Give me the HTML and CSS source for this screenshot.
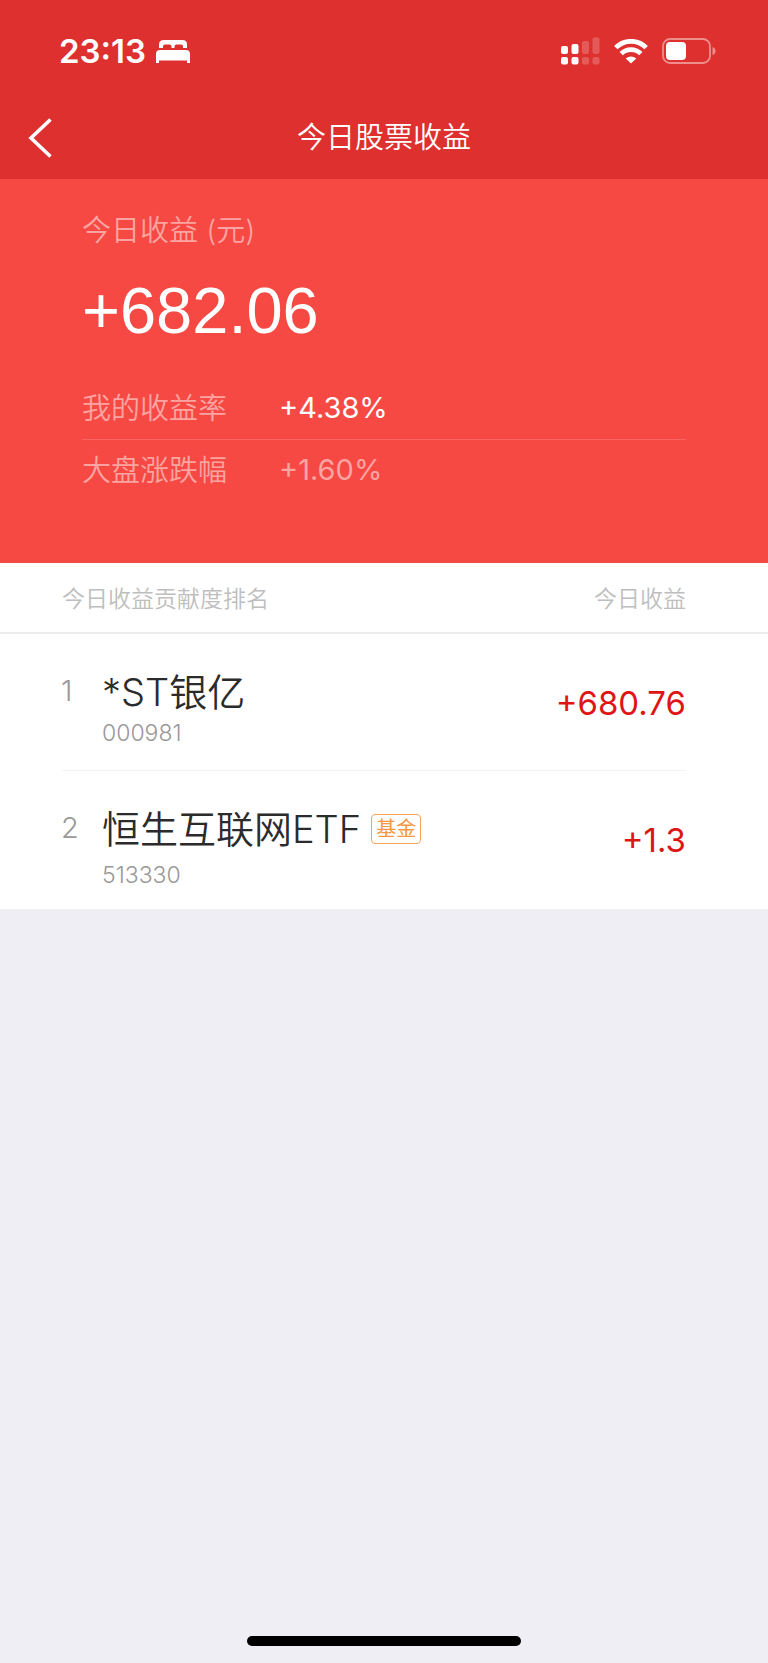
FILE: index.html
```
<!DOCTYPE html>
<html lang="zh-CN">
<head>
    <meta charset="UTF-8">
    <meta name="viewport" content="width=device-width, initial-scale=1.0">
    <title>今日股票收益</title>
    <link rel="stylesheet" href="styles.css">
</head>
<body>
    <header class="header">
        <div class="status-bar">
            <div class="status-left">
                <span class="time">23:13</span>
                <svg class="icon-bed" width="34" height="23" viewBox="0 0 34 23" fill="#fff">
                    <path d="M3 8V4.500Q3 0 7.500 0H26.500Q31 0 31 4.500V8H27V6.500Q27 4.500 25 4.500H20.500Q18.500 4.500 18.500 6.500V8H15.500V6.500Q15.500 4.500 13.500 4.500H9Q7 4.500 7 6.500V8Z"/>
                    <path d="M0 23V14Q0 10 4 10H30Q34 10 34 14V23H31V20.500H3V23Z"/>
                </svg>
            </div>
            <div class="status-right">
                <svg width="39" height="28" viewBox="0 0 39 28" fill="#fff">
                    <rect x="0" y="9" width="7" height="8" rx="2"/>
                    <rect x="10.500" y="7" width="7" height="10" rx="2"/>
                    <rect x="0" y="20" width="7" height="7.500" rx="2"/>
                    <rect x="10.500" y="20" width="7" height="7.500" rx="2"/>
                    <g opacity="0.2">
                        <rect x="21" y="4" width="7" height="13" rx="2"/>
                        <rect x="31.500" y="0.500" width="7" height="16.500" rx="2"/>
                        <rect x="21" y="20" width="7" height="7.500" rx="2"/>
                        <rect x="31.500" y="20" width="7" height="7.500" rx="2"/>
                    </g>
                </svg>
                <svg width="34" height="25" viewBox="0 0 34 25">
                    <g fill="none" stroke="#fff" stroke-width="4.800">
                        <path d="M1.800 8.600A21.500 21.500 0 0 1 32.200 8.600"/>
                        <path d="M7.200 14.600A14 14 0 0 1 26.800 14.600"/>
                    </g>
                    <path d="M17 24.500L11.700 19.500Q17 15.600 22.300 19.500Z" fill="#fff"/>
                </svg>
                <svg width="54" height="26" viewBox="0 0 54 26">
                    <rect x="1" y="1" width="47" height="24" rx="7" fill="none" stroke="#fff" stroke-width="1.800" opacity="0.450"/>
                    <rect x="4" y="4" width="20" height="18" rx="4" fill="#fff"/>
                    <path d="M50.500 9Q53.500 10 53.500 13T50.500 17Z" fill="#fff" opacity="0.450"/>
                </svg>
            </div>
        </div>
        <nav class="nav-bar">
            <button class="back" type="button" aria-label="返回">
                <svg width="24" height="40" viewBox="0 0 24 40" fill="none" stroke="#fff" stroke-width="3.600">
                    <path d="M22.500 1.500L3 20L22.500 38.500"/>
                </svg>
            </button>
            <h1 class="title">今日股票收益</h1>
        </nav>
    </header>

    <main>
        <!-- 收益汇总 -->
        <section class="summary">
            <h2 class="summary-label">今日收益 (元)</h2>
            <p class="summary-value">+682.06</p>
            <dl class="rates">
                <div class="rate">
                    <dt>我的收益率</dt>
                    <dd>+4.38%</dd>
                </div>
                <div class="rate rate-market">
                    <dt>大盘涨跌幅</dt>
                    <dd>+1.60%</dd>
                </div>
            </dl>
        </section>

        <!-- 收益排名 -->
        <table class="ranking">
            <thead>
                <tr>
                    <th colspan="2">今日收益贡献度排名</th>
                    <th class="amount-head">今日收益</th>
                </tr>
            </thead>
            <tbody>
                <tr>
                    <td class="rank">1</td>
                    <td class="stock">
                        <div class="stock-name">*ST银亿</div>
                        <div class="stock-code">000981</div>
                    </td>
                    <td class="amount">+680.76</td>
                </tr>
                <tr>
                    <td class="rank">2</td>
                    <td class="stock">
                        <div class="stock-name tagged">恒生互联网ETF <span class="tag">基金</span></div>
                        <div class="stock-code">513330</div>
                    </td>
                    <td class="amount">+1.3</td>
                </tr>
            </tbody>
        </table>
    </main>

    <div class="home-indicator"></div>
</body>
</html>
```
FILE: styles.css
```
* {
    box-sizing: border-box;
    margin: 0;
    padding: 0;
}

body {
    display: flex;
    flex-direction: column;
    min-height: 100vh;
    background-color: #efeef4;
    color: #2b2b2b;
    font-family: Inter, "Noto Sans CJK SC", sans-serif;
    font-weight: 350;
}

/* 顶部 */
.header {
    background-color: #de302f;
    color: #fff;
}

.status-bar {
    display: flex;
    justify-content: space-between;
    align-items: center;
    height: 102px;
    padding: 0 52px 0 59px;
}

.status-left {
    display: flex;
    align-items: center;
    gap: 10px;
}

.status-right {
    display: flex;
    align-items: center;
    gap: 14px;
}

.time {
    font-size: 33px;
    font-weight: 600;
    line-height: 40px;
}

.nav-bar {
    display: grid;
    grid-template-columns: 80px 1fr 80px;
    align-items: center;
    height: 77px;
    padding-bottom: 6px;
}

.back {
    display: flex;
    padding-left: 28px;
    background: none;
    border: none;
    cursor: pointer;
}

.title {
    font-size: 29px;
    font-weight: 350;
    line-height: 40px;
    text-align: center;
}

.summary {
    padding: 32px 82px 65px;
    background-color: #f64944;
    color: #fff;
}

.summary-label {
    color: #fba4a1;
    font-size: 29px;
    font-weight: 350;
    line-height: 40px;
}

.summary-value {
    margin-top: 22px;
    font-family: "Liberation Sans", Arial, sans-serif;
    font-size: 65px;
    font-weight: 400;
    line-height: 76px;
}

.rates {
    margin-top: 26px;
    font-size: 29px;
}

.rate {
    display: flex;
    align-items: center;
    height: 65px;
    border-bottom: 1px solid #f96560;
}

.rate dt {
    width: 197px;
    padding-bottom: 2px;
    color: #fba4a1;
}

.rate dd {
    font-weight: 400;
}

.rate-market {
    height: 58px;
    border-bottom: none;
    color: #fba4a1;
}

/* 排名表 */
.ranking {
    width: 100%;
    border-collapse: collapse;
    background-color: #fff;
}

.ranking th {
    height: 70px;
    padding: 0 0 2px 62px;
    border-bottom: 2px solid #ececec;
    color: #bebebe;
    font-size: 23px;
    font-weight: 350;
    text-align: left;
}

.ranking th.amount-head {
    padding-right: 82px;
    text-align: right;
}

.ranking td {
    height: 138px;
}

.ranking tbody tr:first-child {
    background: linear-gradient(#f3f3f3, #f3f3f3) 62px 100% / calc(100% - 144px) 1px no-repeat;
}

.ranking .rank {
    width: 102px;
    padding: 37px 0 0 61px;
    color: #999;
    font-size: 29px;
    line-height: 40px;
    vertical-align: top;
}

.ranking .stock {
    padding-top: 36px;
    vertical-align: top;
}

.stock-name {
    display: flex;
    align-items: center;
    gap: 10px;
    font-size: 38px;
    line-height: 44px;
}

.stock-name.tagged {
    margin-bottom: 5px;
}

.tag {
    padding: 0 4px;
    border: 1px solid #f9a35a;
    border-radius: 4px;
    color: #f59642;
    font-size: 20px;
    font-weight: 400;
    line-height: 28px;
}

.stock-code {
    padding-top: 4px;
    color: #999;
    font-size: 23px;
    line-height: 30px;
}

.ranking .amount {
    padding-right: 82px;
    color: #e01414;
    font-size: 33px;
    font-weight: 400;
    text-align: right;
}

.home-indicator {
    width: 274px;
    height: 10px;
    margin: auto auto 17px;
    border-radius: 5px;
    background-color: #000;
}
```
